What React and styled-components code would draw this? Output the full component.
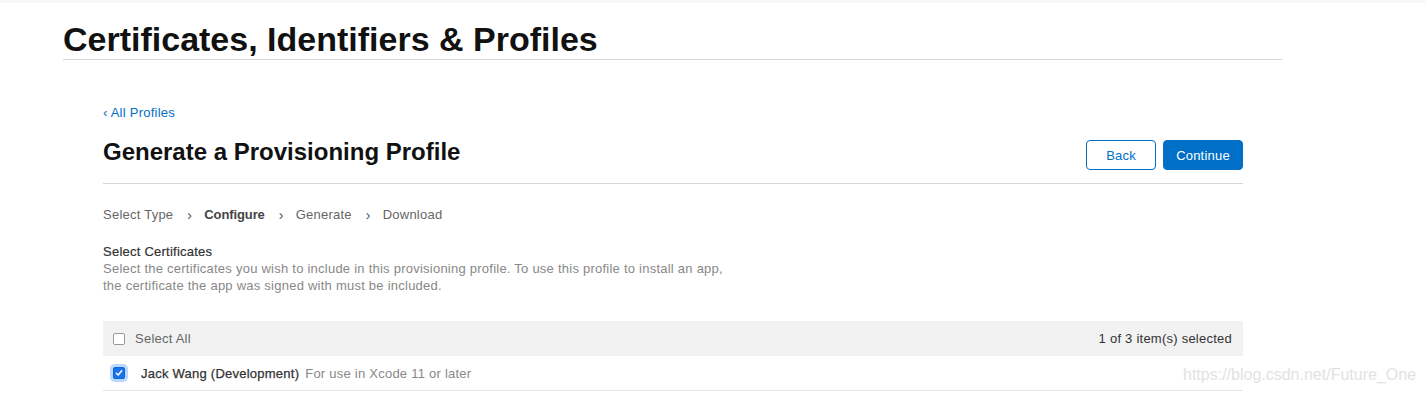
import React from 'react'
import styled, { createGlobalStyle } from 'styled-components'

const GlobalStyle = createGlobalStyle`
  body {
    margin: 0;
    background: #fff;
    font-family: "Liberation Sans", Arial, sans-serif;
    color: #333;
    letter-spacing: 0.24px;
  }
`

const TopBand = styled.div`
  height: 3px;
  background: #f7f7f7;
`

const PageHeader = styled.header`
  margin: 0 143px 0 63px;
  padding-top: 17px;
  border-bottom: 1px solid #d6d6d6;
  h1 {
    margin: 0;
    font-size: 34px;
    line-height: 38px;
    font-weight: 700;
    color: #111;
    letter-spacing: 0;
    padding-bottom: 1px;
  }
`

const Main = styled.main`
  margin: 0 182px 0 103px;
  padding-top: 43px;
`

const BackLink = styled.a`
  display: inline-block;
  font-size: 13px;
  line-height: 16px;
  color: #0070c9;
  text-decoration: none;
`

const TitleRow = styled.div`
  display: flex;
  justify-content: space-between;
  align-items: flex-start;
  margin-top: 17px;
  padding-bottom: 13px;
  border-bottom: 1px solid #d6d6d6;
  h2 {
    margin: 0;
    font-size: 24px;
    line-height: 28px;
    font-weight: 700;
    color: #111;
    letter-spacing: 0;
  }
`

const Buttons = styled.div`
  display: flex;
  gap: 7px;
  padding-top: 2px;
`

const Button = styled.button`
  height: 30px;
  padding: 0;
  width: ${p => p.$w}px;
  border-radius: 4px;
  font-family: inherit;
  font-size: 13px;
  letter-spacing: 0.2px;
  border: 1px solid #0070c9;
  background: ${p => (p.$primary ? '#0070c9' : '#fff')};
  color: ${p => (p.$primary ? '#fff' : '#0070c9')};
`

const Steps = styled.ol`
  display: flex;
  align-items: center;
  list-style: none;
  margin: 0;
  padding: 23px 0 0;
  font-size: 13px;
  line-height: 16px;
  color: #666;
`

const Step = styled.li`
  font-weight: ${p => (p.$active ? 700 : 400)};
  color: ${p => (p.$active ? '#444' : '#666')};
  letter-spacing: ${p => (p.$active ? '-0.1px' : '0.24px')};
`

const Chevron = styled.span`
  margin: 0 12px 0 14px;
  color: #555;
  font-size: 14px;
`

const Section = styled.section`
  padding-top: 20px;
  h3 {
    margin: 0;
    font-size: 13px;
    line-height: 17px;
    font-weight: 400;
    color: #333;
    -webkit-text-stroke: 0.2px #333;
  }
  p {
    margin: 0;
    font-size: 13px;
    line-height: 17px;
    color: #888;
  }
`

const Table = styled.div`
  margin-top: 27px;
`

const HeadRow = styled.div`
  display: flex;
  align-items: center;
  justify-content: space-between;
  height: 35px;
  padding: 0 11px 0 10px;
  background: #f2f2f2;
  font-size: 13px;
  color: #666;
`

const Count = styled.span`
  color: #333;
`

const Row = styled.div`
  display: flex;
  align-items: center;
  height: 34px;
  padding-left: 6px;
  border-bottom: 1px solid #e5e5e5;
  font-size: 13px;
`

const Check = styled.label`
  display: flex;
  align-items: center;
  gap: 10px;
`

const Box = styled.span`
  display: inline-flex;
  align-items: center;
  justify-content: center;
  box-sizing: border-box;
  width: 12px;
  height: 12px;
  border-radius: 2px;
  border: 1px solid ${p => (p.$checked ? '#0a66d8' : '#9a9a9a')};
  background: ${p => (p.$checked ? '#1a73e8' : '#fff')};
  box-shadow: ${p => (p.$checked ? '0 0 0 3px #b8d8ff' : 'none')};
  margin: ${p => (p.$checked ? '0 3px 0 4px' : '0')};
`

const Name = styled.span`
  color: #333;
  -webkit-text-stroke: 0.25px #333;
  margin-right: 6px;
  margin-left: 3px;
`

const Note = styled.span`
  color: #888;
`

const Watermark = styled.div`
  position: absolute;
  left: 1183px;
  top: 366px;
  font-size: 16px;
  color: #e2e2e2;
  letter-spacing: 0;
`

function CheckMark() {
  return (
    <svg width="8" height="8" viewBox="0 0 8 8">
      <path d="M1.3 4.2 L3.2 6 L6.7 1.8" fill="none" stroke="#fff" strokeWidth="1.5" strokeLinecap="round" strokeLinejoin="round" />
    </svg>
  )
}

const steps = ['Select Type', 'Configure', 'Generate', 'Download']

export default function App() {
  return (
    <>
      <GlobalStyle />
      <TopBand />
      <PageHeader>
        <h1>Certificates, Identifiers &amp; Profiles</h1>
      </PageHeader>
      <Main>
        <BackLink href="#">‹ All Profiles</BackLink>
        <TitleRow>
          <h2>Generate a Provisioning Profile</h2>
          <Buttons>
            <Button $w={70}>Back</Button>
            <Button $primary $w={80}>Continue</Button>
          </Buttons>
        </TitleRow>
        <Steps>
          {steps.map((s, i) => (
            <React.Fragment key={s}>
              {i > 0 && <Chevron>›</Chevron>}
              <Step $active={s === 'Configure'}>{s}</Step>
            </React.Fragment>
          ))}
        </Steps>
        <Section>
          <h3>Select Certificates</h3>
          <p>
            Select the certificates you wish to include in this provisioning profile. To use this profile to install an app,
            <br />
            the certificate the app was signed with must be included.
          </p>
        </Section>
        <Table>
          <HeadRow>
            <Check>
              <Box />
              <span>Select All</span>
            </Check>
            <Count>1 of 3 item(s) selected</Count>
          </HeadRow>
          <Row>
            <Check>
              <Box $checked>
                <CheckMark />
              </Box>
              <span>
                <Name>Jack Wang (Development)</Name>
                <Note>For use in Xcode 11 or later</Note>
              </span>
            </Check>
          </Row>
        </Table>
      </Main>
      <Watermark>https://blog.csdn.net/Future_One</Watermark>
    </>
  )
}
